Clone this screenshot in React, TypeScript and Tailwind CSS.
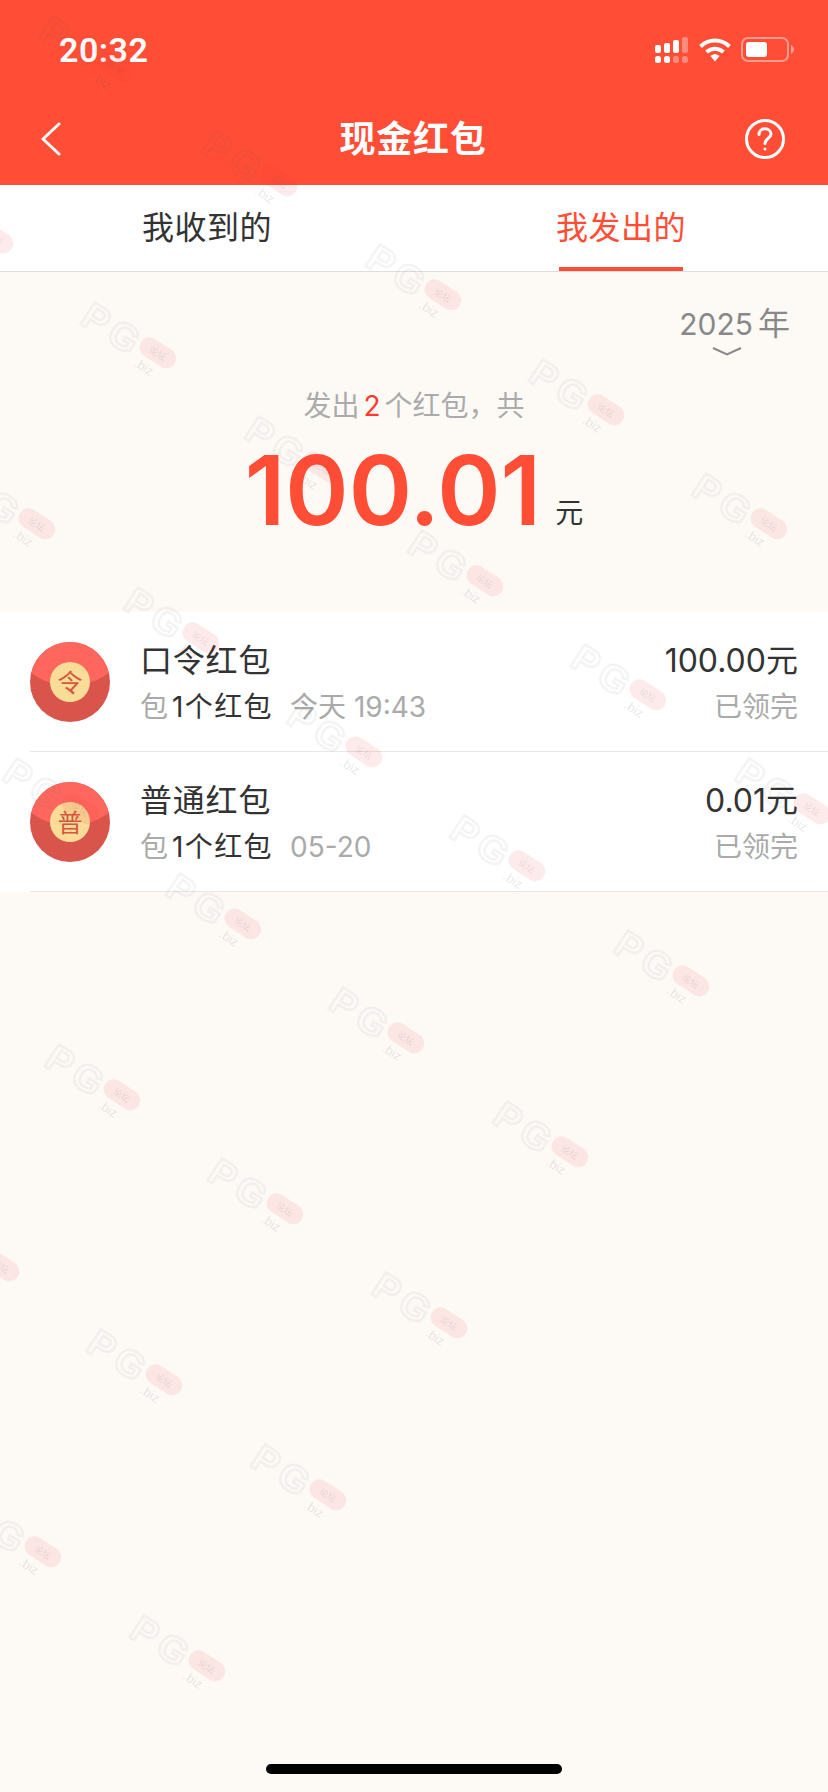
const font = "font-['Inter','Noto_Sans_CJK_SC',sans-serif]";

// watermark tile: rows of the lattice that the reference really shows, [j, first i, last i]
const markRows = [
  [0, 0, 4],
  [1, -1, 4],
  [2, -1, 3],
  [3, -1, 2],
  [4, -1, 1],
  [5, -2, 0],
  [6, -2, -1],
];
const marks: { x: number; y: number }[] = [];
markRows.forEach(([j, from, to]) => {
  for (let i = from; i <= to; i++) {
    marks.push({ x: 38 + 163.3 * i + 42.3 * j, y: 15 + 114.2 * i + 285.5 * j });
  }
});

const Watermark = ({ x, y }: { x: number; y: number }) => (
  <div className="absolute origin-top-left rotate-[33deg] w-[110px] h-[50px]" style={{ left: x + 14, top: y - 4 }}>
    <span className="absolute left-[1px] top-[-5px] text-[38px] leading-[44px] font-bold text-transparent font-['Liberation_Sans',sans-serif] [-webkit-text-stroke:3px_rgba(80,80,100,0.06)]">
      P
    </span>
    <span className="absolute left-[32px] top-[-5px] text-[38px] leading-[44px] font-bold text-transparent font-['Liberation_Sans',sans-serif] [-webkit-text-stroke:3px_rgba(80,80,100,0.06)]">
      G
    </span>
    <span className="absolute left-[70px] top-[25px] text-[13px] leading-[14px] text-[#505064]/15 font-['Liberation_Sans',sans-serif]">.biz</span>
    <span className="absolute left-[64px] top-[2px] w-[40px] h-[20px] rounded-full bg-[#f03c3c]/10 flex items-center justify-center text-[9px] leading-none text-[#505064]/15 font-['Noto_Sans_CJK_SC',sans-serif]">
      论坛
    </span>
  </div>
);

const SignalIcon = () => (
  <svg width="33" height="26" viewBox="0 0 33 26" fill="#fff">
    <rect x="0" y="8" width="6" height="8" rx="2" />
    <rect x="9" y="6" width="6" height="10" rx="2" />
    <rect x="18" y="3" width="6" height="13" rx="2" />
    <rect x="27" y="0" width="6" height="16" rx="2" opacity="0.35" />
    <rect x="0" y="19" width="6" height="7" rx="2.5" />
    <rect x="9" y="19" width="6" height="7" rx="2.5" />
    <rect x="18" y="19" width="6" height="7" rx="2.5" opacity="0.35" />
    <rect x="27" y="19" width="6" height="7" rx="2.5" opacity="0.35" />
  </svg>
);

const WifiIcon = () => (
  <svg width="32" height="25" viewBox="0 0 32 25" fill="none" stroke="#fff" strokeWidth="4">
    <path d="M1.5 9.5C9.5 1.5 22.5 1.5 30.500 9.500" />
    <path d="M7.500 15C12.500 10.500 19.500 10.500 24.500 15" />
    <path d="M11.500 19L16 24.500L20.500 19C18 16.800 14 16.800 11.500 19Z" fill="#fff" stroke="none" />
  </svg>
);

const BatteryIcon = () => (
  <svg width="54" height="25" viewBox="0 0 54 25" fill="none">
    <rect x="1" y="1" width="46" height="23" rx="6" stroke="#fff" strokeOpacity="0.45" strokeWidth="2" />
    <rect x="5" y="5" width="21" height="15" rx="3" fill="#fff" />
    <path d="M50 8C52 9 53 11 53 12.500C53 14 52 16 50 17Z" fill="#fff" fillOpacity="0.45" />
  </svg>
);

const RedPacket = ({ label }: { label: string }) => (
  <div className="relative w-20 h-20 shrink-0 rounded-full overflow-hidden bg-[#d9544a]">
    <div className="absolute left-[-30px] top-[-112px] w-[140px] h-[156px] rounded-[50%] bg-[#ff675e]" />
    <div className="absolute left-5 top-5 w-10 h-10 rounded-full bg-[#f9dc97] flex items-center justify-center text-[25px] leading-none text-[#d6563f] font-['Noto_Sans_CJK_SC',serif]">
      {label}
    </div>
  </div>
);

const rows = [
  { label: '令', title: '口令红包', time: '今天 19:43', amount: '100.00' },
  { label: '普', title: '普通红包', time: '05-20', amount: '0.01' },
];

export default function App() {
  return (
    <div className={`relative w-[828px] h-[1792px] overflow-hidden flex flex-col bg-[#fdfaf6] ${font}`}>
      <div className="bg-[#ff4d36] h-[185px] shrink-0 text-white">
        <div className="h-[100px] flex items-start justify-between pl-[59px] pr-[33px] pt-[37px]">
          <span className="text-[34px] leading-[26px] font-semibold font-['Roboto',sans-serif] tracking-[0.5px]">20:32</span>
          <div className="flex items-start">
            <SignalIcon />
            <div className="ml-[11px]"><WifiIcon /></div>
            <div className="ml-[10px]"><BatteryIcon /></div>
          </div>
        </div>
        <div className="h-[78px] flex items-center justify-between pl-[41px] pr-[43px]">
          <div className="w-[40px]">
            <svg width="20" height="34" viewBox="0 0 20 34" fill="none" stroke="#fff" strokeWidth="3" strokeLinecap="round" strokeLinejoin="round">
              <path d="M18 2L2 17L18 32" />
            </svg>
          </div>
          <span className="text-[36px] leading-[44px] font-semibold tracking-[0.8px]">现金红包</span>
          <svg width="40" height="40" viewBox="0 0 40 40" fill="none" stroke="#fff" strokeWidth="3" strokeLinecap="round">
            <circle cx="20" cy="20" r="18.500" />
            <path d="M14 15.500C14 12 16.700 9.800 20 9.800C23.300 9.800 26 12 26 15C26 18.800 20 19.500 20 24.500" />
            <circle cx="20" cy="30" r="1.500" fill="#fff" stroke="none" />
          </svg>
        </div>
      </div>

      <div className="h-[87px] shrink-0 bg-white border-b border-[#dedede] flex">
        <div className="w-[414px] flex items-center justify-center pb-[1px] text-[32px] tracking-[0.5px] text-[#333]">我收到的</div>
        <div className="relative w-[414px] flex items-center justify-center pb-[1px] text-[32px] tracking-[0.5px] text-[#ff4d36]">
          我发出的
          <div className="absolute bottom-0 left-[145px] w-[124px] h-1 bg-[#ff4d36]" />
        </div>
      </div>

      <div className="h-[340px] shrink-0 flex flex-col">
        <div className="self-end mr-[38px] mt-[32px] flex flex-col items-center text-[#888]">
          <span className="text-[32px] leading-[40px] flex gap-[5px]"><span className="text-[30px]">2025</span><span>年</span></span>
          <svg width="30" height="9" viewBox="0 0 30 9" fill="none" stroke="#888" strokeWidth="2" className="mt-[3px] -translate-x-[8px]">
            <path d="M1 1L15 7.500L29 1" />
          </svg>
        </div>
        <div className="mt-[30px] text-center text-[28px] leading-[40px] text-[#ababab]">
          发出<span className="text-[#ff3b30] mx-[4px]">2</span>个红包，共
        </div>
        <div className="mt-[9px] flex items-end justify-center">
          <span className="text-[96px] leading-[110px] font-semibold text-[#ff4d36]">100.01</span>
          <span className="ml-[14px] mb-[12px] text-[28px] leading-[40px] text-[#333]">元</span>
        </div>
      </div>

      <div className="bg-white shrink-0">
        {rows.map(row => (
          <div key={row.label} className="ml-[30px] h-[140px] border-b border-[#e8e8e8] flex items-center pr-[30px]">
            <RedPacket label={row.label} />
            <div className="ml-[30px] pt-[4px] flex flex-col gap-[6px]">
              <div className="text-[32px] leading-[40px] tracking-[0.8px] text-[#333]">{row.title}</div>
              <div className="text-[28px] leading-[40px] text-[#aaa] flex">
                <span>包</span>
                <span className="text-[#333] ml-[4px] tracking-[1.4px]">1个红包</span>
                <span className="ml-[17px]">{row.time}</span>
              </div>
            </div>
            <div className="ml-auto pt-[4px] flex flex-col items-end gap-[6px]">
              <div className="text-[32px] leading-[40px] text-[#333]">{row.amount}元</div>
              <div className="text-[28px] leading-[40px] text-[#aaa]">已领完</div>
            </div>
          </div>
        ))}
      </div>

      <div className="mt-auto mb-[18px] self-center w-[296px] h-[10px] rounded-full bg-black" />

      <div className="absolute inset-0 pointer-events-none overflow-hidden">
        {marks.map(m => (
          <Watermark key={`${m.x}-${m.y}`} x={m.x} y={m.y} />
        ))}
      </div>
    </div>
  );
}
